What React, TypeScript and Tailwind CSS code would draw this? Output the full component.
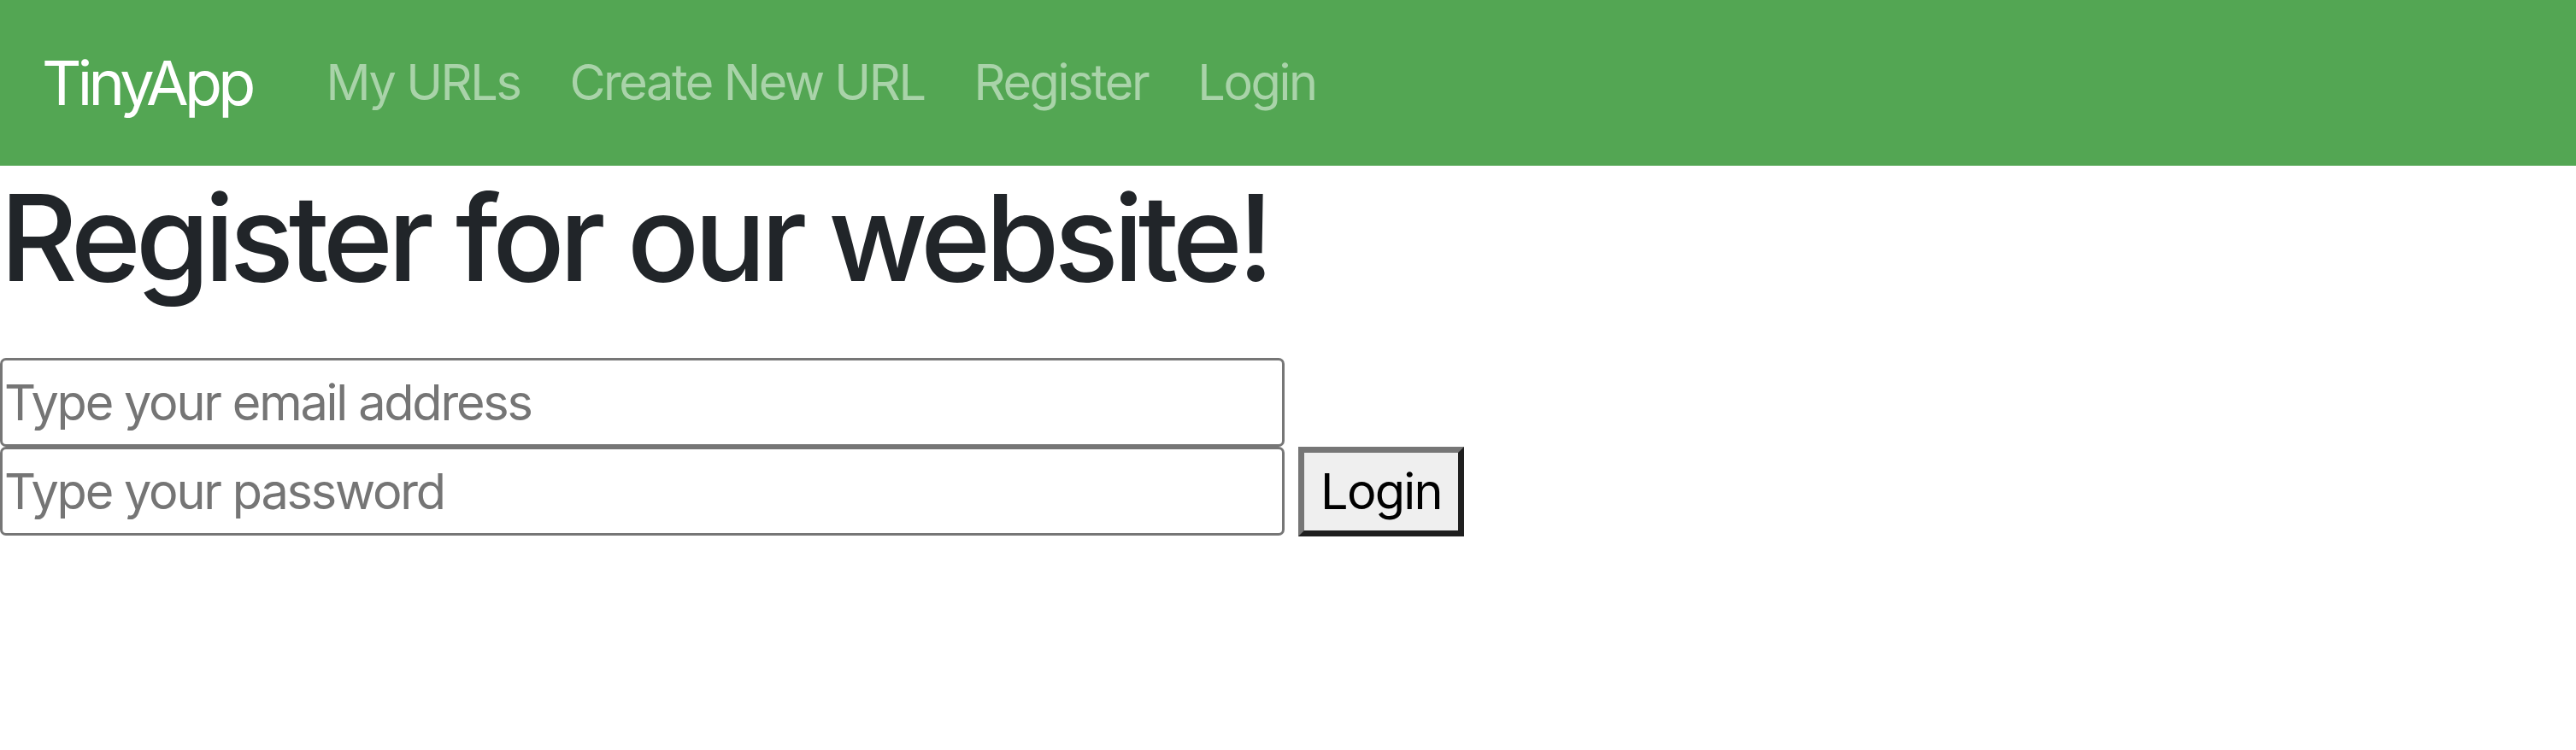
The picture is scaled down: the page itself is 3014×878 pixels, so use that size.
import React from 'react';

const navLinks = ['My URLs', 'Create New URL', 'Register', 'Login'];

const App = () => {
  return (
    <div className="min-h-screen bg-white font-['Inter',sans-serif] text-[#212529]">
      {/* Navbar */}
      <nav className="flex h-[194px] items-center bg-[#53a653] px-[49px]">
        <a href="#" className="mr-[58px] text-[72px] leading-none tracking-[-0.066em] text-white">
          TinyApp
        </a>
        <div className="flex items-center">
          {navLinks.map((link) => (
            <a
              key={link}
              href="#"
              className="px-[29px] text-[57.6px] leading-none tracking-[-0.042em] text-[#a9d3a9]"
            >
              {link}
            </a>
          ))}
        </div>
      </nav>

      {/* Register form */}
      <main>
        <h1 className="mb-[57px] text-[140px] font-medium leading-[168px] tracking-[-0.044em]">
          Register for our website!
        </h1>
        <form className="flex flex-col">
          <input
            type="email"
            placeholder="Type your email address"
            className="h-[104px] w-[1503px] rounded-[7px] border-[3px] border-[#767676] px-[2px] text-[57.6px] tracking-[-0.038em] text-black placeholder:text-[#757575]"
          />
          <div className="flex items-start gap-[16px]">
            <input
              type="password"
              placeholder="Type your password"
              className="h-[104px] w-[1503px] rounded-[7px] border-[3px] border-[#767676] px-[2px] text-[57.6px] tracking-[-0.038em] text-black placeholder:text-[#757575]"
            />
            <button
              type="submit"
              className="flex h-[105px] w-[194px] items-center justify-center border-[7px] border-t-[#767676] border-l-[#767676] border-b-[#1f1f1f] border-r-[#1f1f1f] bg-[#efefef] text-[57.6px] tracking-[-0.03em] text-black"
            >
              Login
            </button>
          </div>
        </form>
      </main>
    </div>
  );
};

export default App;
